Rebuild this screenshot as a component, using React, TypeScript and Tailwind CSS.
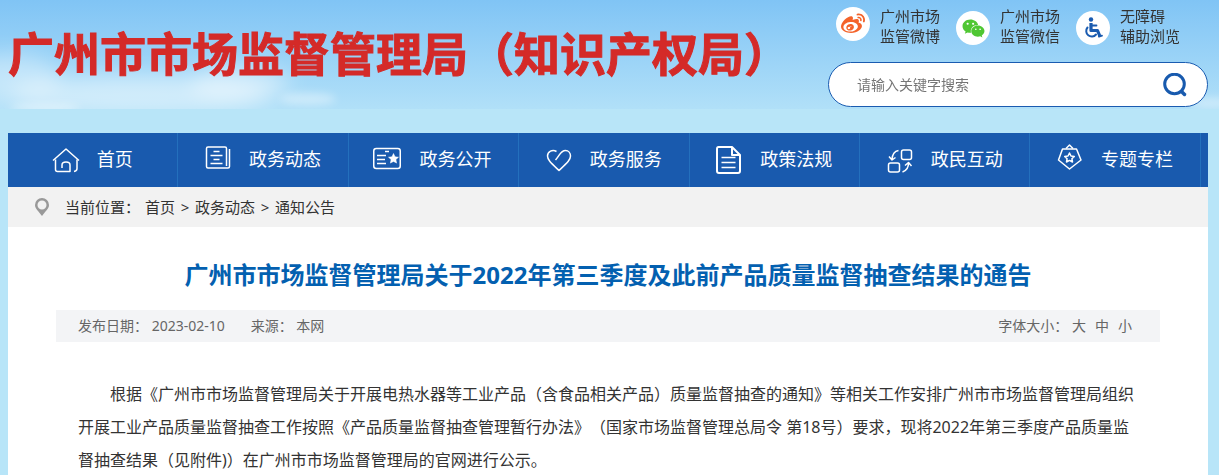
import type { ReactNode } from "react";
import { FaWeibo, FaWeixin } from "react-icons/fa";

type NavItem = {
  label: string;
  icon: ReactNode;
};

const navItems: NavItem[] = [
  {
    label: "首页",
    icon: (
      <>
        <path d="M2 16.500 15 5l13 11.500" />
        <path d="M4.500 15.500v10q0 2 2 2H19V21q0-3-4-3t-4 3v3" />
        <path d="M26 15.500v9q0 2.500-3 3" />
      </>
    ),
  },
  {
    label: "政务动态",
    icon: (
      <>
        <path d="M23.500 22V4.500q0-1.500-1.500-1.500H5Q3.500 3 3.500 4.500v18Q3.500 24 5 24h20q1.500 0 1.500-1.500V5" />
        <path d="M10.500 7.500h6M7.500 11.500h12M10.500 15.500h6M7.500 19.500h12" />
      </>
    ),
  },
  {
    label: "政务公开",
    icon: (
      <>
        <rect x="0.750" y="4.500" width="26.500" height="20" rx="2.500" />
        <path d="M12 7.500h4M4 11.500h9M4 15.500h8M4 19.500h9" />
        <path
          fill="currentColor"
          strokeWidth="0.500"
          d="m20.500 9.500 1.500 3.300 3.500.4-2.600 2.400.7 3.500-3.100-1.700-3.100 1.700.7-3.500-2.600-2.400 3.500-.4z"
        />
      </>
    ),
  },
  {
    label: "政务服务",
    icon: (
      <path d="M12.500 7.500C8.500 5 3.500 7.500 3.500 12c0 4 3.500 7 11.500 14.500C23 19 26.500 16 26.500 12c0-3-2-5.500-5-5.500-5 0-5.500 4.500-10 9.500" />
    ),
  },
  {
    label: "政策法规",
    icon: (
      <g strokeWidth="2">
        <path d="M4.500 3H18l8 8v16q0 2-2 2H5q-2 0-2-2V5q0-2 1.500-2z" />
        <path d="M18 3.500V11h7.500" />
        <path strokeWidth="1.500" d="M7.500 13.500h14M7.500 18.500h14M7.500 23.500h14" />
      </g>
    ),
  },
  {
    label: "政民互动",
    icon: (
      <>
        <rect x="16.500" y="6" width="10" height="9.500" rx="2" />
        <rect x="3.500" y="19" width="11" height="9" rx="2" />
        <path d="M13.500 6.500Q7.500 7.500 7 15.500M4 12.500l3 3.500 3.500-2.500" />
        <path d="M17.500 28q6-2 6-9M20 21.500l3.500-3 3 3.500" />
      </>
    ),
  },
  {
    label: "专题专栏",
    icon: (
      <>
        <path d="M7.500 5h14l4.500 11-11.500 9L3.500 16z" />
        <path d="M11 4.500 14.500 1 18 4.500" />
        <path d="m14.500 9 1.500 3 3.300.4-2.400 2.300.6 3.300-3-1.600-3 1.600.6-3.300-2.400-2.300 3.300-.4z" />
      </>
    ),
  },
];

function SkyClouds() {
  return (
    <svg
      className="absolute left-0 top-0 h-[109px] w-full"
      viewBox="0 0 1219 109"
      preserveAspectRatio="none"
      aria-hidden="true"
    >
      <defs>
        <filter id="soft" x="-50%" y="-100%" width="200%" height="300%">
          <feGaussianBlur stdDeviation="10" />
        </filter>
        <filter id="wisp" x="-50%" y="-100%" width="200%" height="300%">
          <feGaussianBlur stdDeviation="4" />
        </filter>
      </defs>
      <g fill="#fff" filter="url(#soft)">
        <ellipse cx="10" cy="78" rx="50" ry="24" opacity="0.35" />
        <ellipse cx="140" cy="94" rx="130" ry="19" opacity="0.45" />
        <ellipse cx="240" cy="84" rx="50" ry="18" opacity="0.4" />
      </g>
      <g fill="#fff" filter="url(#wisp)">
        <ellipse cx="308" cy="99" rx="28" ry="6" opacity="0.4" />
        <ellipse cx="45" cy="108" rx="35" ry="4" opacity="0.5" />
        <ellipse cx="1212" cy="103" rx="22" ry="5" opacity="0.4" />
      </g>
    </svg>
  );
}

function WheelchairIcon() {
  return (
    <svg width="20" height="22" viewBox="0 0 20 22" fill="none" stroke="currentColor" aria-hidden="true">
      <circle cx="8" cy="2.500" r="2.200" fill="currentColor" stroke="none" />
      <path d="M8 6v7.500h6.500l2.500 6" strokeWidth="3.200" strokeLinejoin="round" />
      <path d="M8 8.500h5.500M16 19.700l3-1" strokeWidth="1.800" strokeLinecap="round" />
      <path d="M4.500 10.500a5.500 5.500 0 1 0 8.500 7" strokeWidth="2" strokeLinecap="round" />
    </svg>
  );
}

type QuickLinkProps = {
  lines: [string, string];
  icon: ReactNode;
  iconClass: string;
};

function QuickLink({ lines, icon, iconClass }: QuickLinkProps) {
  return (
    <a href="#" className="flex w-[120px] gap-[10px] text-[15px] leading-5 text-[#333]">
      <span
        className={`flex size-[34px] shrink-0 items-center justify-center rounded-full bg-white ${iconClass}`}
      >
        {icon}
      </span>
      <span>
        {lines[0]}
        <br />
        {lines[1]}
      </span>
    </a>
  );
}

function SearchBox() {
  return (
    <form
      className="mt-4 flex h-[45px] items-center rounded-full border border-[#1a5bb0] bg-white pl-7 pr-5"
      onSubmit={(e) => e.preventDefault()}
    >
      <input
        type="text"
        aria-label="搜索"
        placeholder="请输入关键字搜索"
        className="min-w-0 flex-1 bg-transparent text-sm outline-none placeholder:text-[#757575]"
      />
      <button type="submit" aria-label="提交搜索" className="text-[#185aae]">
        <svg width="24" height="24" viewBox="0 0 24 24" fill="none" stroke="currentColor" strokeWidth="3">
          <circle cx="11.500" cy="11" r="9.800" />
          <path d="m18.500 18.500 3 3" strokeWidth="3.500" strokeLinecap="round" />
        </svg>
      </button>
    </form>
  );
}

export default function App() {
  return (
    <div className="min-h-screen bg-[#b8e5f8] font-['Noto_Sans','Noto_Sans_CJK_SC',sans-serif] text-[#333] [text-spacing-trim:space-all]">
      {/* Header */}
      <header className="relative h-[133px]">
        <div className="absolute inset-x-0 top-0 h-[109px] bg-linear-to-b from-[#80c4f5] to-[#b1e0f8]" />
        <SkyClouds />
        <div className="relative ml-2 mr-[11px] flex justify-between">
          <h1 className="whitespace-nowrap pt-[21px] text-[46px] font-bold leading-[64px] text-[#d42a28] [-webkit-text-stroke:1px_#d42a28]">
            广州市市场监督管理局（知识产权局）
          </h1>
          <div className="w-[380px] shrink-0 pt-[6px]">
            <div className="flex pl-2">
              <QuickLink
                lines={["广州市场", "监管微博"]}
                icon={<FaWeibo size={24} />}
                iconClass="mt-px text-[#f4632a]"
              />
              <QuickLink
                lines={["广州市场", "监管微信"]}
                icon={<FaWeixin size={23} />}
                iconClass="mt-[5px] text-[#4fc733]"
              />
              <QuickLink
                lines={["无障碍", "辅助浏览"]}
                icon={<WheelchairIcon />}
                iconClass="mt-[5px] text-[#1a5bb0]"
              />
            </div>
            <SearchBox />
          </div>
        </div>
      </header>

      <div className="ml-2 mr-[11px] min-h-[342px] bg-white">
        {/* Main navigation */}
        <nav className="flex h-[54px] bg-[#195aae] text-white">
          {navItems.map((item) => (
            <a
              key={item.label}
              href="#"
              className="flex w-[14.2%] items-center justify-center gap-[18px] border-r border-[#2470bd] pr-[2px] text-lg"
            >
              <svg
                className="h-8 w-7 shrink-0 overflow-visible"
                viewBox="0 0 28 32"
                fill="none"
                stroke="currentColor"
                strokeWidth="1.500"
                strokeLinejoin="round"
                aria-hidden="true"
              >
                {item.icon}
              </svg>
              <span className="pb-[3px]">{item.label}</span>
            </a>
          ))}
        </nav>

        {/* Breadcrumb */}
        <div className="flex h-10 items-center bg-[#f2f2f2] pl-[27px] text-[15px]">
          <svg width="14" height="18" viewBox="0 0 14 18" className="mr-4 shrink-0" aria-hidden="true">
            <path
              fill="#999"
              fillRule="evenodd"
              d="M7 0a7 7 0 0 1 7 7c0 4-4 6.500-7 11C4 13.500 0 11 0 7a7 7 0 0 1 7-7zm0 2.500a4.500 4.500 0 1 0 0 9 4.500 4.500 0 0 0 0-9z"
            />
          </svg>
          <span className="mr-[5px]">当前位置：</span>
          <a href="#">首页</a>
          <span className="w-5 text-center">&gt;</span>
          <a href="#">政务动态</a>
          <span className="w-5 text-center">&gt;</span>
          <a href="#">通知公告</a>
        </div>

        {/* Article */}
        <article className="px-12 pt-[30px]">
          <h2 className="text-center text-2xl font-bold leading-9 text-[#0360b0]">
            广州市市场监督管理局关于2022年第三季度及此前产品质量监督抽查结果的通告
          </h2>
          <div className="mt-[17px] flex h-8 items-center justify-between bg-[#f3f4f6] pl-[22px] pr-7 text-sm text-[#666]">
            <div className="flex gap-[26px]">
              <span>发布日期： 2023-02-10</span>
              <span>来源： 本网</span>
            </div>
            <div className="flex gap-[9px]">
              <span>
                字体大小： <button type="button">大</button>
              </span>
              <button type="button">中</button>
              <button type="button">小</button>
            </div>
          </div>
          <p className="mt-9 px-[22px] indent-8 text-base leading-[33px]">
            根据《广州市市场监督管理局关于开展电热水器等工业产品（含食品相关产品）质量监督抽查的通知》等相关工作安排广州市市场监督管理局组织开展工业产品质量监督抽查工作按照《产品质量监督抽查管理暂行办法》（国家市场监督管理总局令
            第18号）要求，现将2022年第三季度产品质量监督抽查结果（见附件)）在广州市市场监督管理局的官网进行公示。
          </p>
        </article>
      </div>
    </div>
  );
}
